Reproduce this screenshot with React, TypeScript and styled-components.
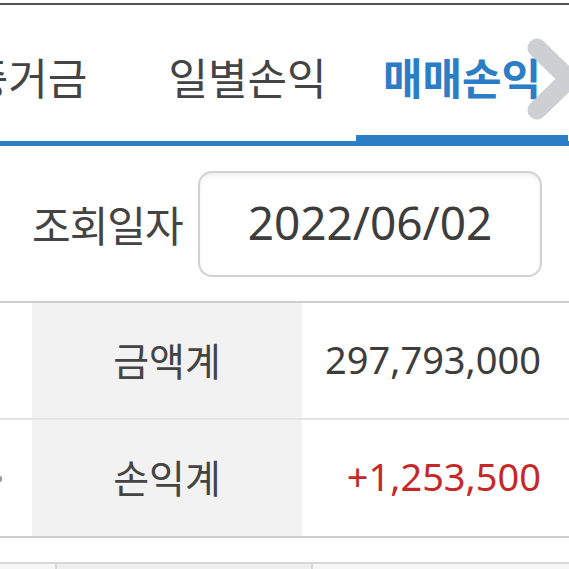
import React from "react";
import styled, { createGlobalStyle } from "styled-components";

const GlobalStyle = createGlobalStyle`
  html, body {
    margin: 0;
    padding: 0;
    background: #fff;
  }
  body {
    font-family: "Noto Sans CJK KR", "Noto Sans", sans-serif;
    color: #444;
    overflow: hidden;
  }
  * {
    box-sizing: border-box;
  }
`;

const Page = styled.div`
  width: 569px;
  height: 569px;
  overflow: hidden;
  display: flex;
  flex-direction: column;
  padding-top: 3px;
  & > * {
    flex-shrink: 0;
  }
`;

const TopRule = styled.div`
  height: 2px;
  background: #555;
`;

const TabBar = styled.div`
  position: relative;
  height: 141px;
  display: flex;
  align-items: stretch;
  overflow: hidden;
  border-bottom: 5px solid #2b7dc6;
`;

const TabStrip = styled.div`
  display: flex;
  margin-left: -83px;
`;

const Tab = styled.div<{ $active?: boolean; $width: number }>`
  position: relative;
  display: flex;
  align-items: center;
  justify-content: center;
  width: ${(p) => p.$width}px;
  flex-shrink: 0;
  font-size: 43px;
  font-weight: ${(p) => (p.$active ? 700 : 400)};
  color: ${(p) => (p.$active ? "#2b7dc6" : "#444")};
  padding-top: 6px;
  &::after {
    content: "";
    display: ${(p) => (p.$active ? "block" : "none")};
    position: absolute;
    left: 0;
    right: 0;
    bottom: -5px;
    height: 11px;
    background: #2b7dc6;
  }
`;

const NextArrow = styled.svg`
  position: absolute;
  right: -12px;
  top: 32px;
  width: 58px;
  height: 84px;
  opacity: 0.82;
`;

const SearchRow = styled.div`
  height: 157px;
  display: flex;
  align-items: center;
  padding-left: 32px;
  padding-right: 27px;
  border-bottom: 2px solid #cfcfcf;
`;

const Label = styled.div`
  font-size: 42px;
  letter-spacing: -1px;
  white-space: nowrap;
`;

const DateBox = styled.div`
  margin-left: auto;
  width: 344px;
  flex-shrink: 0;
  height: 106px;
  border: 2px solid #d2d2d2;
  border-radius: 14px;
  box-shadow: inset 0 3px 4px rgba(0, 0, 0, 0.06);
  display: flex;
  align-items: center;
  justify-content: center;
  font-size: 46px;
  font-family: "Noto Sans", sans-serif;
  color: #3d3d3d;
  padding-bottom: 4px;
`;

const SumTable = styled.div`
  display: grid;
  grid-template-columns: 32px 270px 1fr;
  border-bottom: 2px solid #cfcfcf;
`;

const Cell = styled.div<{ $kind: "blank" | "head" | "value"; $last?: boolean }>`
  height: ${(p) => (p.$last ? 116 : 117)}px;
  display: flex;
  align-items: center;
  justify-content: ${(p) => (p.$kind === "value" ? "flex-end" : "center")};
  padding-right: ${(p) => (p.$kind === "value" ? 28 : 0)}px;
  background: ${(p) => (p.$kind === "head" ? "#f2f2f2" : "#fff")};
  border-bottom: ${(p) => (p.$last ? "none" : "2px solid #e4e4e4")};
  font-size: ${(p) => (p.$kind === "value" ? 38 : 39)}px;
  font-family: ${(p) =>
    p.$kind === "value" ? '"Noto Sans", sans-serif' : "inherit"};
  padding-bottom: 4px;
  overflow: hidden;
`;

const Amount = styled.span<{ $tone?: "up" }>`
  color: ${(p) => (p.$tone === "up" ? "#c62828" : "#3d3d3d")};
`;

const EdgeMark = styled.span`
  align-self: center;
  margin-right: auto;
  margin-top: 6px;
  width: 2px;
  height: 6px;
  border-radius: 0 2px 2px 0;
  background: #999;
`;

const Gap = styled.div`
  height: 24px;
`;

const ListHead = styled.div`
  display: grid;
  grid-template-columns: 57px 256px 1fr;
  border-top: 2px solid #d8d8d8;
  flex: 1 0 auto;
`;

const HeadCell = styled.div<{ $shade?: boolean }>`
  background: ${(p) => (p.$shade ? "#f0f0f0" : "#f6f6f6")};
  border-right: 2px solid #d8d8d8;
  &:last-child {
    border-right: none;
  }
`;

const tabs = [
  { label: "증거금", width: 222 },
  { label: "일별손익", width: 217 },
  { label: "매매손익", width: 212, active: true },
];

const sums = [
  { head: "금액계", value: "297,793,000" },
  { head: "손익계", value: "+1,253,500", tone: "up" as const },
];

export default function App() {
  return (
    <Page>
      <GlobalStyle />
      <TopRule />
      <TabBar>
        <TabStrip>
          {tabs.map((t) => (
            <Tab key={t.label} $active={t.active} $width={t.width}>
              {t.label}
            </Tab>
          ))}
        </TabStrip>
        <NextArrow viewBox="0 0 58 84">
          <path
            d="M14 11 L46 42 L14 73"
            fill="none"
            stroke="#c4c5ca"
            strokeWidth="19"
            strokeLinecap="round"
            strokeLinejoin="round"
          />
        </NextArrow>
      </TabBar>
      <SearchRow>
        <Label>조회일자</Label>
        <DateBox>2022/06/02</DateBox>
      </SearchRow>
      <SumTable>
        {sums.map((s, i) => {
          const last = i === sums.length - 1;
          return (
            <React.Fragment key={s.head}>
              <Cell $kind="blank" $last={last}>
                {last && <EdgeMark />}
              </Cell>
              <Cell $kind="head" $last={last}>
                {s.head}
              </Cell>
              <Cell $kind="value" $last={last}>
                <Amount $tone={s.tone}>{s.value}</Amount>
              </Cell>
            </React.Fragment>
          );
        })}
      </SumTable>
      <Gap />
      <ListHead>
        <HeadCell />
        <HeadCell $shade />
        <HeadCell />
      </ListHead>
    </Page>
  );
}
